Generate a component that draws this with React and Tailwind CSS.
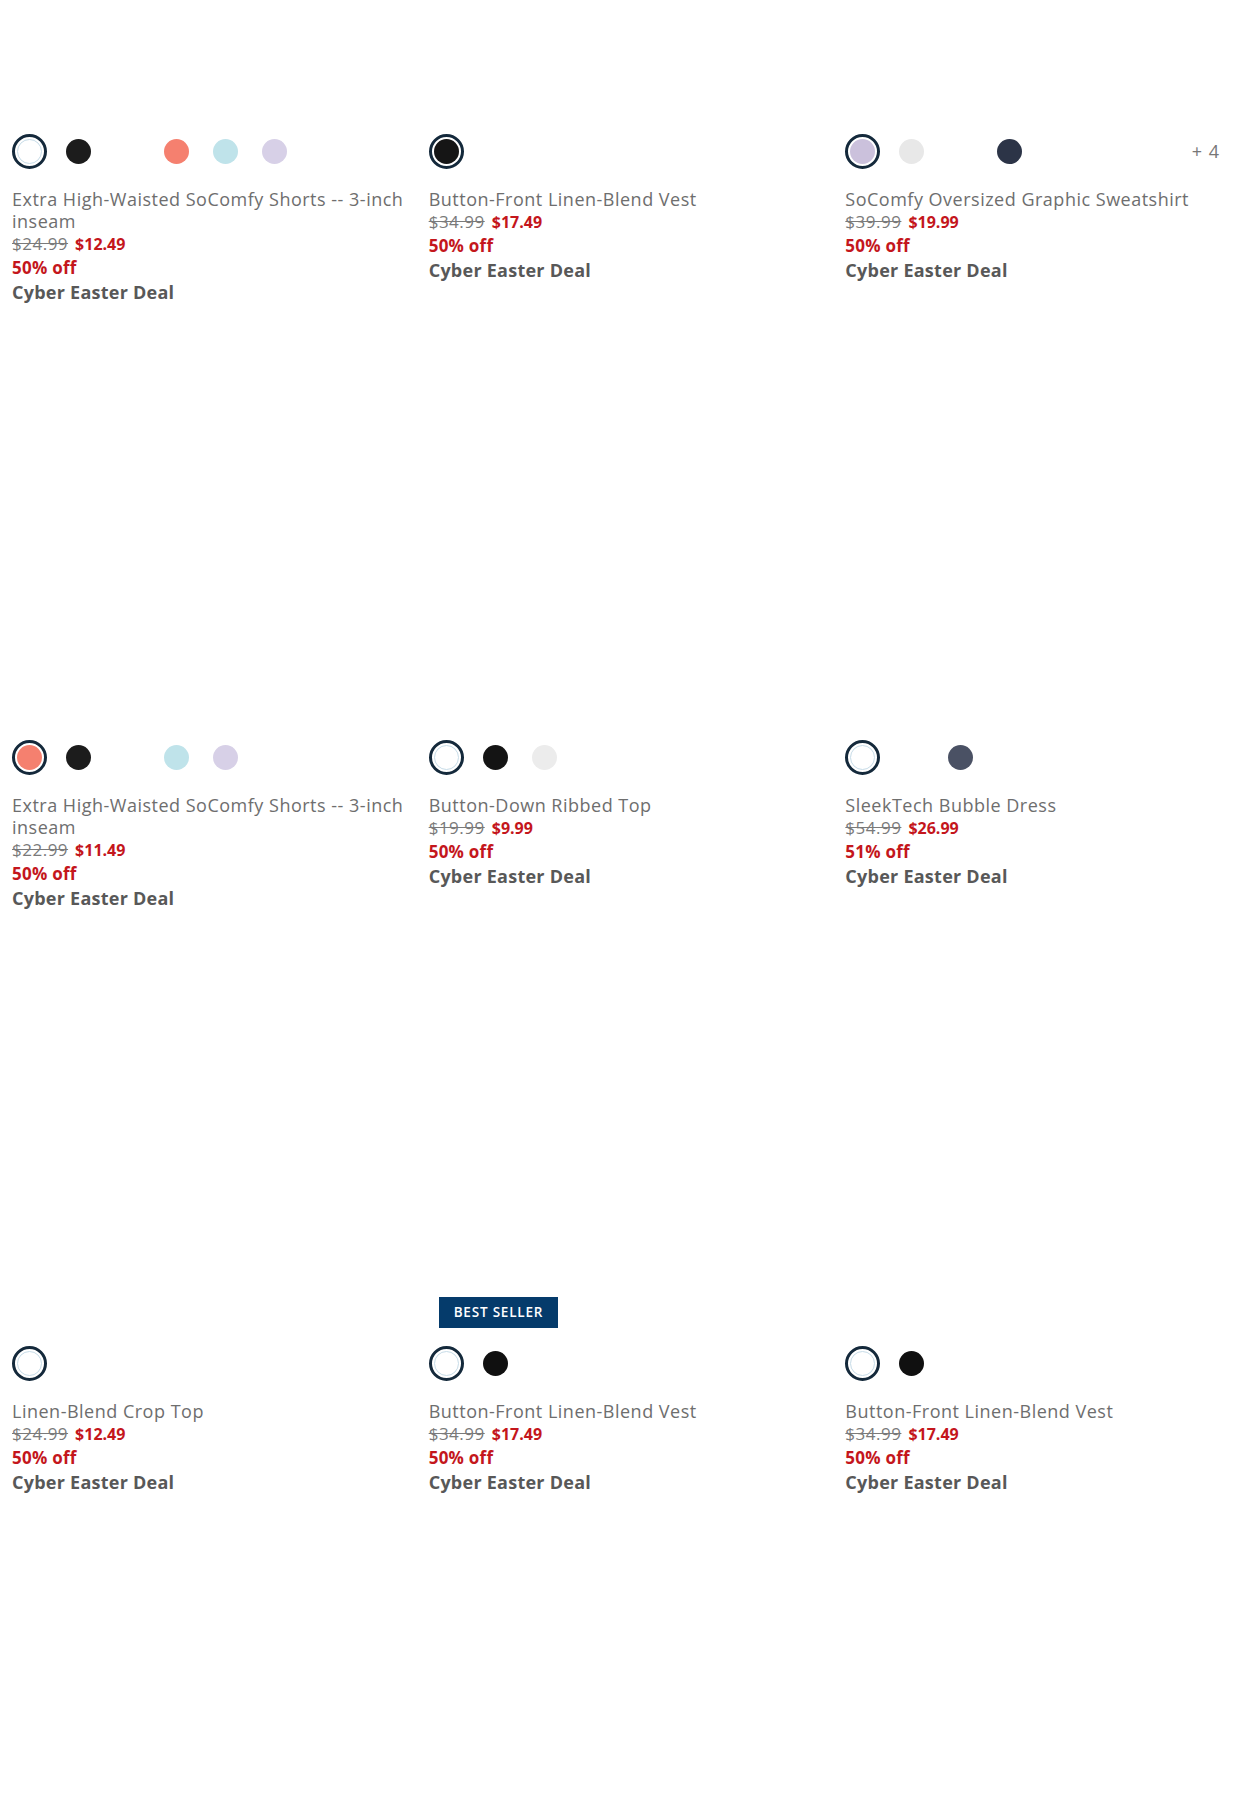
import React from 'react';

const W = '#ffffff';

const products = [
  {
    name: 'Extra High-Waisted SoComfy Shorts -- 3-inch inseam',
    was: '$24.99',
    now: '$12.49',
    off: '50% off',
    swatches: [W, '#1c1c1c', W, '#f5806f', '#bfe3ea', '#d7d0e7'],
  },
  {
    name: 'Button-Front Linen-Blend Vest',
    was: '$34.99',
    now: '$17.49',
    off: '50% off',
    swatches: ['#151515'],
  },
  {
    name: 'SoComfy Oversized Graphic Sweatshirt',
    was: '$39.99',
    now: '$19.99',
    off: '50% off',
    swatches: ['#cbc1dc', '#e8e8e8', W, '#2c3447', W, W, W],
    more: '+ 4',
  },
  {
    name: 'Extra High-Waisted SoComfy Shorts -- 3-inch inseam',
    was: '$22.99',
    now: '$11.49',
    off: '50% off',
    swatches: ['#f5806f', '#1c1c1c', W, '#bfe3ea', '#d7d0e7'],
  },
  {
    name: 'Button-Down Ribbed Top',
    was: '$19.99',
    now: '$9.99',
    off: '50% off',
    swatches: [W, '#141414', '#ececec'],
  },
  {
    name: 'SleekTech Bubble Dress',
    was: '$54.99',
    now: '$26.99',
    off: '51% off',
    swatches: [W, W, '#4a5164'],
  },
  {
    name: 'Linen-Blend Crop Top',
    was: '$24.99',
    now: '$12.49',
    off: '50% off',
    swatches: [W],
  },
  {
    name: 'Button-Front Linen-Blend Vest',
    was: '$34.99',
    now: '$17.49',
    off: '50% off',
    swatches: [W, '#101010'],
    badge: 'BEST SELLER',
  },
  {
    name: 'Button-Front Linen-Blend Vest',
    was: '$34.99',
    now: '$17.49',
    off: '50% off',
    swatches: [W, '#101010'],
  },
];

function Swatch({ color, selected }) {
  if (selected) {
    return (
      <button className="flex h-[35px] w-[35px] items-center justify-center rounded-full border-[3px] border-[#14293b] bg-white">
        <span
          className={
            color === W
              ? 'h-[25px] w-[25px] rounded-full border border-[#c7dce8]'
              : 'h-[25px] w-[25px] rounded-full'
          }
          style={{ backgroundColor: color }}
        />
      </button>
    );
  }
  return (
    <button className="flex h-[35px] w-[35px] items-center justify-center">
      <span className="h-[25px] w-[25px] rounded-full" style={{ backgroundColor: color }} />
    </button>
  );
}

function ProductCard({ product }) {
  return (
    <div className="flex flex-col pb-6 pl-3 pr-2">
      {/* product image (not loaded) */}
      <div className="relative h-[402px] bg-white">
        {product.badge && (
          <span className="absolute bottom-[8px] left-[10px] bg-[#053b6b] px-[15px] py-[7px] text-[13.5px] font-semibold leading-[17px] tracking-[0.8px] text-white">
            {product.badge}
          </span>
        )}
      </div>

      <div className="mt-[10px] flex h-[35px] items-center gap-[14px]">
        {product.swatches.map((c, i) => (
          <Swatch key={i} color={c} selected={i === 0} />
        ))}
        {product.more && (
          <span className="flex w-[35px] justify-center whitespace-nowrap text-[18px] tracking-[1px] text-[#777]">
            {product.more}
          </span>
        )}
      </div>

      <a href="#" className="mt-[19px] text-[18px] leading-[22px] tracking-[0.5px] text-[#6e6e6e]">
        {product.name}
      </a>
      <div className="flex items-baseline gap-[7px] leading-[24px]">
        <span className="text-[17px] tracking-[0.5px] text-[#7a7a7a] line-through">{product.was}</span>
        <span className="text-[16px] font-bold text-[#c4161c]">{product.now}</span>
      </div>
      <div className="text-[17px] font-bold leading-[24px] tracking-[0.25px] text-[#c4161c]">{product.off}</div>
      <div className="text-[18px] font-bold leading-[24px] tracking-[0.25px] text-[#585858]">Cyber Easter Deal</div>
    </div>
  );
}

export default function App() {
  return (
    <div className="h-[1818px] overflow-hidden bg-white font-['Open_Sans',sans-serif]">
      <div className="-mt-[278px] grid grid-cols-3">
        {products.map((p, i) => (
          <ProductCard key={i} product={p} />
        ))}
      </div>
    </div>
  );
}
